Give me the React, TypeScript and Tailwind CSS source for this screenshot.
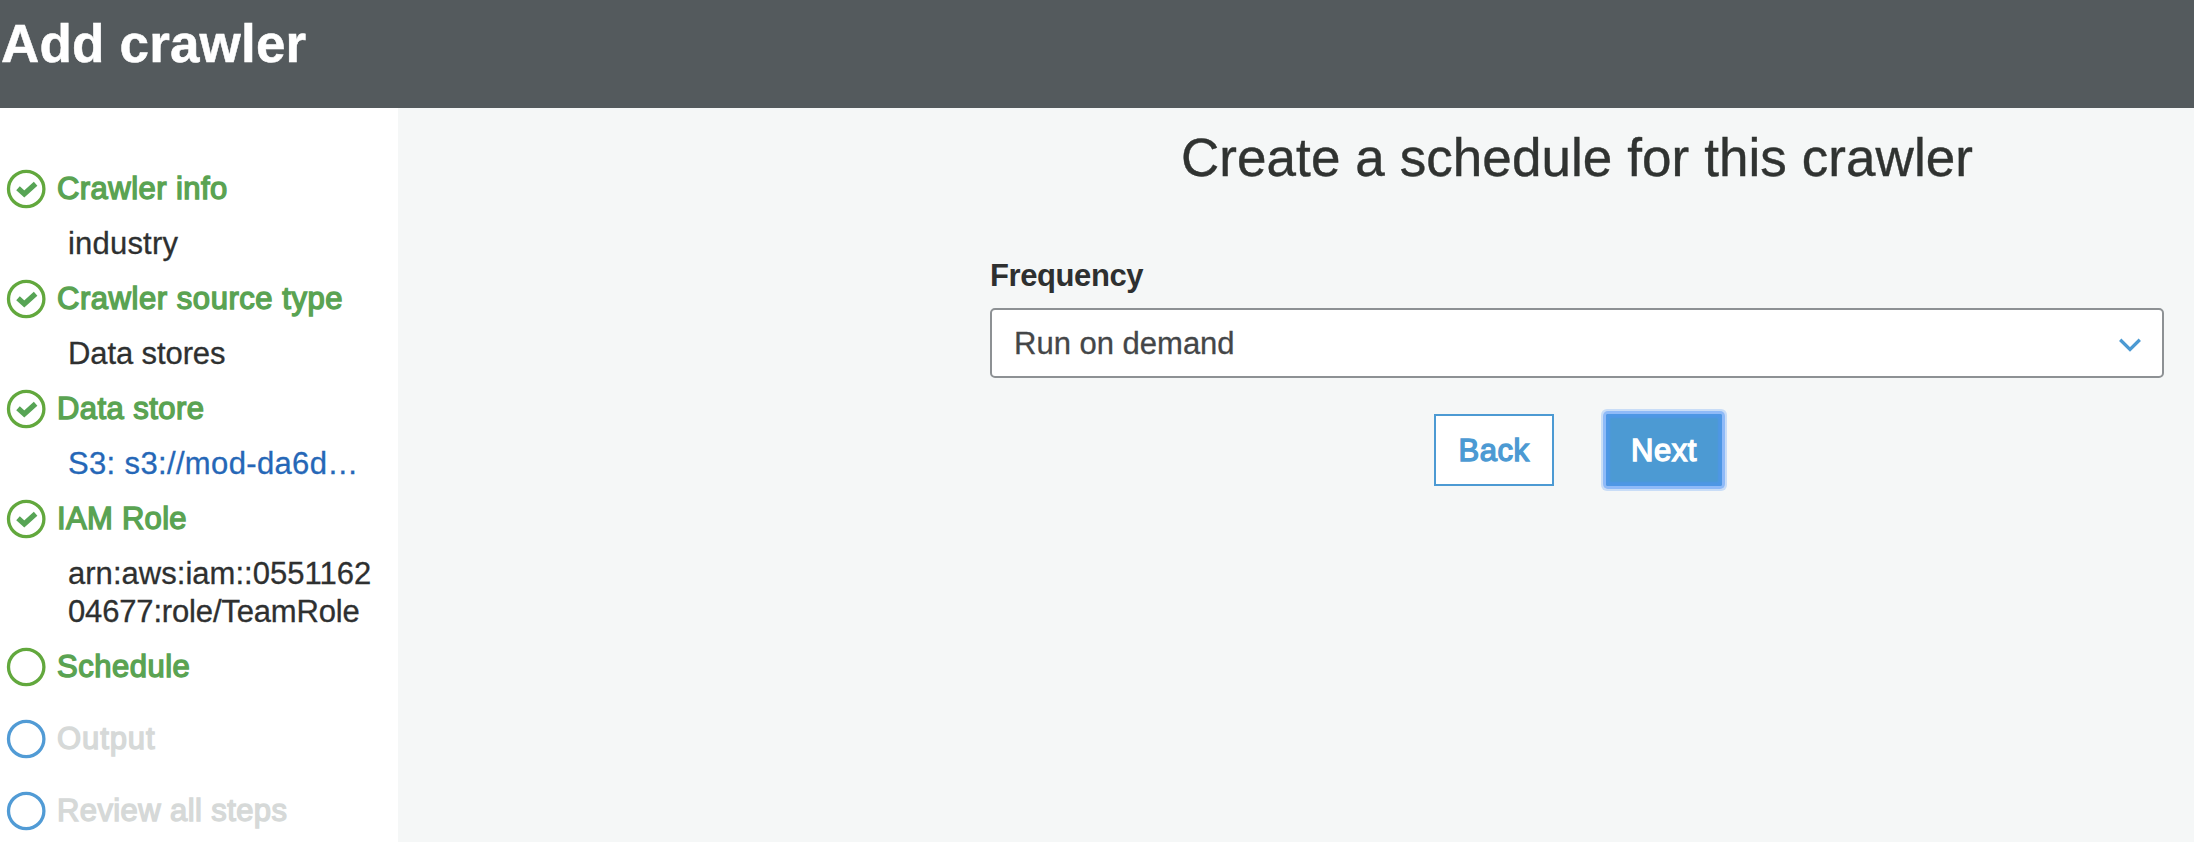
type StepState = "done" | "current" | "pending";

interface Step {
  label: string;
  state: StepState;
  spacing: string;
  detail?: string[];
  link?: boolean;
  detailSpacing?: string;
}

const steps: Step[] = [
  { label: "Crawler info", state: "done", spacing: "tracking-[0.45px]", detail: ["industry"], detailSpacing: "tracking-[0.2px]" },
  { label: "Crawler source type", state: "done", spacing: "tracking-[0.55px]", detail: ["Data stores"], detailSpacing: "tracking-[-0.1px]" },
  { label: "Data store", state: "done", spacing: "tracking-[0.45px]", detail: ["S3: s3://mod-da6d…"], link: true, detailSpacing: "tracking-[0.35px]" },
  {
    label: "IAM Role",
    state: "done",
    spacing: "tracking-[0.3px]",
    detail: ["arn:aws:iam::0551162", "04677:role/TeamRole"],
    detailSpacing: "tracking-[0.03px] last:tracking-[-0.16px]",
  },
  { label: "Schedule", state: "current", spacing: "tracking-[0.5px]" },
  { label: "Output", state: "pending", spacing: "tracking-[0.9px]" },
  { label: "Review all steps", state: "pending", spacing: "tracking-[0.4px]" },
];

const medium = "[-webkit-text-stroke:1.4px_currentColor]";

function StepIcon({ state }: { state: StepState }) {
  return (
    <svg viewBox="0 0 40 40" className="h-10 w-10 shrink-0" fill="none">
      <circle cx="20.2" cy="20" r="17.7" stroke={state === "pending" ? "#519bd5" : "#62a83d"} strokeWidth="3.3" />
      {state === "done" && <path d="M12 19.3 L18.3 25 L29.6 14.8" stroke="#57a455" strokeWidth="5.3" />}
    </svg>
  );
}

function StepItem({ step }: { step: Step }) {
  return (
    <li className={step.detail ? "pb-[17px]" : "pb-8"}>
      <div className="flex h-10 items-center gap-[11px] pl-[6px]">
        <StepIcon state={step.state} />
        <span
          className={`${medium} ${step.spacing} pt-[2px] whitespace-nowrap ${step.state === "pending" ? "text-[#d6d9d8]" : "text-[#5aa352]"}`}
        >
          {step.label}
        </span>
      </div>
      {step.detail && (
        <div className={`pt-[15px] pl-[68px] leading-[38px] ${step.link ? "text-[#2567b7]" : "text-[#2e3030]"}`}>
          {step.detail.map((line) => (
            <p key={line} className={`relative top-px whitespace-nowrap [-webkit-text-stroke:0.3px_currentColor] ${step.detailSpacing}`}>
              {line}
            </p>
          ))}
        </div>
      )}
    </li>
  );
}

export default function App() {
  return (
    <div className="flex h-[842px] w-[2194px] flex-col overflow-hidden bg-white font-['Liberation_Sans',Arial,sans-serif] text-[31px]">
      <header className="h-[108px] shrink-0 bg-[#545a5d]">
        <h1 className="pt-[14px] pl-px text-[53px] leading-[60px] font-bold tracking-[0.18px] text-white [-webkit-text-stroke:0.5px_currentColor]">
          Add crawler
        </h1>
      </header>
      <div className="flex min-h-0 flex-1">
        <aside className="w-[398px] shrink-0 pt-[60.5px]">
          <ol>
            {steps.map((step) => (
              <StepItem key={step.label} step={step} />
            ))}
          </ol>
        </aside>
        <main className="flex-1 bg-[#f5f7f7] pl-[592px]">
          <div className="w-[1174px]">
            <h2 className="pt-[20px] text-center text-[53px] leading-[60px] tracking-[0.08px] text-[#303331] [-webkit-text-stroke:0.4px_currentColor]">
              Create a schedule for this crawler
            </h2>
            <label className="mt-[69px] block leading-[38px] font-bold tracking-[-0.4px] text-[#2e3030]">Frequency</label>
            <div className="mt-[13px] flex h-[70px] items-center justify-between rounded-[5px] border-2 border-[#8d9194] bg-white pr-[20px] pl-[22px] text-[#444648]">
              <span className="pt-[2px] [-webkit-text-stroke:0.3px_currentColor]">Run on demand</span>
              <svg viewBox="0 0 24 16" className="mt-[3px] h-4 w-6" fill="none">
                <path d="M2.2 2.8 L12 12.4 L21.8 2.8" stroke="#4c9ad3" strokeWidth="3.3" />
              </svg>
            </div>
            <div className="mt-9 flex gap-[52px] pl-[444px]">
              <button className={`${medium} h-[72px] w-[120px] border-2 border-[#4c9ad3] bg-white pt-[2px] tracking-[0.55px] text-[#4c9ad3]`}>
                Back
              </button>
              <button
                className={`${medium} h-[72px] w-[116px] rounded-[2px] bg-[#4c9ad3] pt-[2px] tracking-[0.55px] text-white shadow-[0_0_0_3px_#8fbaf8,0_0_0_5px_#c9ddf7,inset_0_0_2px_4px_#4e97e5]`}
              >
                Next
              </button>
            </div>
          </div>
        </main>
      </div>
    </div>
  );
}
